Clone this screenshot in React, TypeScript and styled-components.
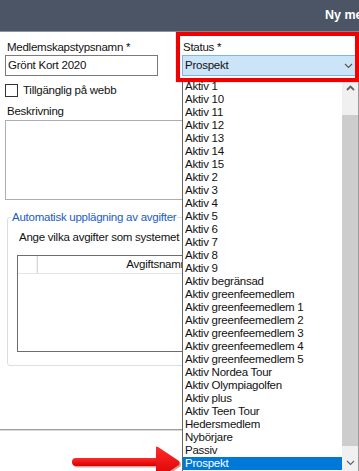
import React from "react";
import styled, { createGlobalStyle } from "styled-components";

const GlobalStyle = createGlobalStyle`
  html, body { margin: 0; padding: 0; background: #fff; }
  body {
    font-family: "Liberation Sans", Arial, sans-serif;
    font-size: 11.5px;
    letter-spacing: -0.25px;
    color: #111;
  }
  * { box-sizing: border-box; }
`;

const Window = styled.div`
  position: relative;
  width: 359px;
  height: 471px;
  overflow: hidden;
  background: #fff;
  display: flex;
  flex-direction: column;
`;

const TitleBar = styled.header`
  flex: none;
  height: 32px;
  background: #4b5565;
  border-bottom: 1px solid #8c939c;
  color: #fff;
  font-weight: bold;
  font-size: 12.5px;
  letter-spacing: 0;
  line-height: 31px;
  padding-left: 325px;
  white-space: nowrap;
  overflow: hidden;
`;

const Form = styled.div`
  flex: 1;
  display: flex;
  flex-direction: column;
  padding: 8px 0 0 5px;
`;

const TopRow = styled.div`
  display: grid;
  grid-template-columns: 153px 176px;
  column-gap: 24px;
`;

const Field = styled.div`
  display: flex;
  flex-direction: column;
  gap: 1px;
`;

const Label = styled.div<{ $indent?: number }>`
  height: 14px;
  line-height: 14px;
  padding-left: ${(p) => p.$indent ?? 2}px;
  white-space: nowrap;
`;

const TextBox = styled.div`
  height: 21px;
  border: 1px solid #7a7a7a;
  padding: 0 2px;
  line-height: 19px;
  background: #fff;
  white-space: nowrap;
`;

const SelectBox = styled.div`
  height: 21px;
  border: 1px solid #7eb4ea;
  background: #cce4f7;
  padding: 0 4px 0 2px;
  line-height: 19px;
  display: flex;
  align-items: center;
  justify-content: space-between;
`;

const CheckRow = styled.div`
  margin-top: 7px;
  display: flex;
  align-items: center;
  gap: 5px;
  height: 14px;
`;

const CheckBox = styled.span`
  width: 13px;
  height: 13px;
  border: 1px solid #333;
  background: #fff;
`;

const Section = styled.div`
  margin-top: 7px;
`;

const TextArea = styled.div`
  margin-top: 2px;
  width: 345px;
  height: 80px;
  border: 1px solid #abadb3;
  background: #fff;
`;

const GroupBox = styled.fieldset`
  margin: 10px 0 0 2px;
  width: 345px;
  min-width: 0;
  padding: 0 0 13px 3px;
  border: 1px solid #d5dfe5;
  border-radius: 3px;
`;

const Legend = styled.legend`
  padding: 0 1px;
  line-height: 14px;
  color: #1c5bbd;
  white-space: nowrap;
`;

const Hint = styled.div`
  margin: 6px 0 0 8px;
  line-height: 14px;
  white-space: nowrap;
`;

const Grid = styled.div`
  margin: 11px 0 0 6px;
  width: 330px;
  height: 97px;
  border: 1px solid #6d6d6d;
  background: #fff;
  display: flex;
  flex-direction: column;
`;

const GridHeader = styled.div`
  display: grid;
  grid-template-columns: 20px 238px 1fr;
  height: 18px;
  border-bottom: 1px solid #e3e3e3;
`;

const HeaderCell = styled.div`
  border-right: 1px solid #d5d5d5;
  box-shadow: inset -1px 0 0 #f4f4f4;
  text-align: center;
  line-height: 17px;
  white-space: nowrap;
`;

const Separator = styled.div`
  margin: 63px 0 0 -5px;
  height: 2px;
  border-top: 1px solid #9d9d9d;
  border-bottom: 1px solid #d9d9d9;
`;

const RedBox = styled.div`
  position: absolute;
  top: 32px;
  left: 176px;
  width: 183px;
  height: 50px;
  border: 4px solid #f20000;
  z-index: 3;
  box-shadow: 0 0 1px rgba(120, 0, 0, 0.6);
`;

const Dropdown = styled.div`
  position: absolute;
  top: 79px;
  left: 182px;
  width: 177px;
  bottom: 0;
  background: #fff;
  border-left: 1px solid #646464;
  border-right: 1px solid #9a9a9a;
  display: flex;
  z-index: 2;
`;

const List = styled.ul`
  flex: 1;
  margin: 0;
  padding: 1px 0 0;
  list-style: none;
`;

const Item = styled.li<{ $selected?: boolean }>`
  height: 13px;
  line-height: 13px;
  padding-left: 2px;
  white-space: nowrap;
  background: ${(p) => (p.$selected ? "#0078d7" : "transparent")};
  color: ${(p) => (p.$selected ? "#fff" : "#111")};
`;

const ScrollBar = styled.div`
  width: 16px;
  flex: none;
  background: #f0f0f0;
  display: flex;
  flex-direction: column;
`;

const ScrollButton = styled.div`
  height: 17px;
  flex: none;
  display: flex;
  align-items: center;
  justify-content: center;
`;

const Track = styled.div`
  flex: 1;
  display: flex;
  padding: 19px 0 8px;
`;

const Thumb = styled.div`
  flex: 1;
  background: #cdcdcd;
`;

const ArrowWrap = styled.div`
  position: absolute;
  left: 68px;
  top: 444px;
  width: 118px;
  height: 36px;
  z-index: 4;
`;

const items = [
  "Aktiv 1", "Aktiv 10", "Aktiv 11", "Aktiv 12", "Aktiv 13", "Aktiv 14", "Aktiv 15",
  "Aktiv 2", "Aktiv 3", "Aktiv 4", "Aktiv 5", "Aktiv 6", "Aktiv 7", "Aktiv 8", "Aktiv 9",
  "Aktiv begränsad", "Aktiv greenfeemedlem", "Aktiv greenfeemedlem 1", "Aktiv greenfeemedlem 2",
  "Aktiv greenfeemedlem 3", "Aktiv greenfeemedlem 4", "Aktiv greenfeemedlem 5",
  "Aktiv Nordea Tour", "Aktiv Olympiagolfen", "Aktiv plus", "Aktiv Teen Tour",
  "Hedersmedlem", "Nybörjare", "Passiv", "Prospekt",
];

const Chevron = ({ up, color = "#555", w = 9 }: { up?: boolean; color?: string; w?: number }) => (
  <svg width={w} height={6} viewBox="0 0 9 6">
    <path
      d={up ? "M1 5 L4.5 1.5 L8 5" : "M1 1 L4.5 4.5 L8 1"}
      fill="none"
      stroke={color}
      strokeWidth={up ? 1.8 : 1.1}
    />
  </svg>
);

const RedArrow = () => (
  <svg width="118" height="36" viewBox="0 0 118 36">
    <defs>
      <linearGradient id="ag" x1="0" y1="0" x2="0" y2="1">
        <stop offset="0" stopColor="#ff2a2a" />
        <stop offset="1" stopColor="#d80000" />
      </linearGradient>
    </defs>
    <g transform="translate(1.5 1.5)" fill="#8a0000" opacity="0.35">
      <rect x="4" y="14" width="92" height="8" rx="4" />
      <path d="M88 3 Q88 2 90 3 L111 17 Q112 19 111 21 L90 35 Q88 36 88 34 Z" />
    </g>
    <rect x="4" y="14" width="92" height="8" rx="4" fill="url(#ag)" />
    <path d="M88 3 Q88 2 90 3 L111 17 Q112 19 111 21 L90 35 Q88 36 88 34 Z" fill="url(#ag)" />
  </svg>
);

export default function App() {
  return (
    <Window>
      <GlobalStyle />
      <TitleBar>Ny medlemskapstyp</TitleBar>
      <Form>
        <TopRow>
          <Field>
            <Label>Medlemskapstypsnamn *</Label>
            <TextBox>Grönt Kort 2020</TextBox>
          </Field>
          <Field>
            <Label $indent={1}>Status *</Label>
            <SelectBox>
              <span>Prospekt</span>
              <Chevron />
            </SelectBox>
          </Field>
        </TopRow>
        <CheckRow>
          <CheckBox />
          <span>Tillgänglig på webb</span>
        </CheckRow>
        <Section>
          <Label>Beskrivning</Label>
          <TextArea />
        </Section>
        <GroupBox>
          <Legend>Automatisk upplägning av avgifter</Legend>
          <Hint>Ange vilka avgifter som systemet ska lägga upp automatiskt</Hint>
          <Grid>
            <GridHeader>
              <HeaderCell />
              <HeaderCell>Avgiftsnamn</HeaderCell>
              <HeaderCell />
            </GridHeader>
          </Grid>
        </GroupBox>
        <Separator />
      </Form>

      <RedBox />
      <Dropdown>
        <List>
          {items.map((t) => (
            <Item key={t} $selected={t === "Prospekt"}>
              {t}
            </Item>
          ))}
        </List>
        <ScrollBar>
          <ScrollButton>
            <Chevron up color="#606060" />
          </ScrollButton>
          <Track>
            <Thumb />
          </Track>
          <ScrollButton>
            <Chevron color="#606060" />
          </ScrollButton>
        </ScrollBar>
      </Dropdown>
      <ArrowWrap>
        <RedArrow />
      </ArrowWrap>
    </Window>
  );
}
